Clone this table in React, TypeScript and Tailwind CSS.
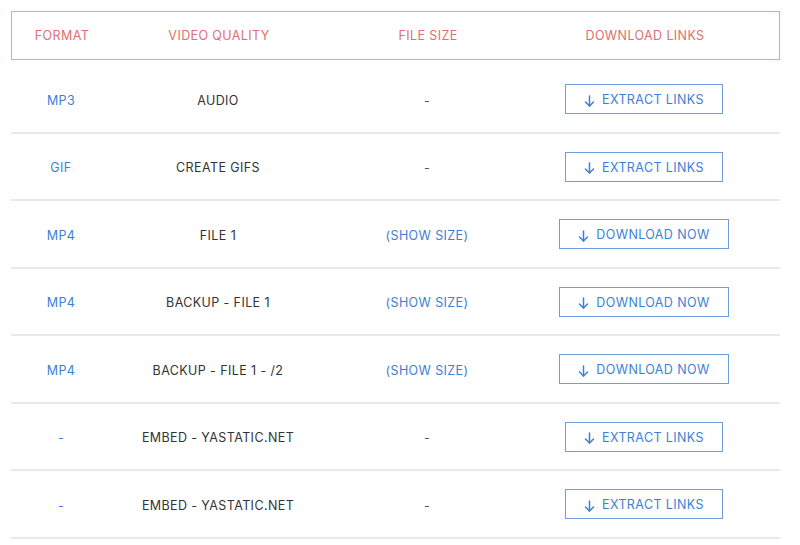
import React from "react";

type Row = {
  format: string;
  quality: string;
  size: string;
  sizeLink?: boolean;
  action: "extract" | "download";
};

const rows: Row[] = [
  { format: "MP3", quality: "AUDIO", size: "-", action: "extract" },
  { format: "GIF", quality: "CREATE GIFS", size: "-", action: "extract" },
  { format: "MP4", quality: "FILE 1", size: "(SHOW SIZE)", sizeLink: true, action: "download" },
  { format: "MP4", quality: "BACKUP - FILE 1", size: "(SHOW SIZE)", sizeLink: true, action: "download" },
  { format: "MP4", quality: "BACKUP - FILE 1 - /2", size: "(SHOW SIZE)", sizeLink: true, action: "download" },
  { format: "-", quality: "EMBED - YASTATIC.NET", size: "-", action: "extract" },
  { format: "-", quality: "EMBED - YASTATIC.NET", size: "-", action: "extract" },
];

const Arrow = () => (
  <svg width="11" height="12" viewBox="0 0 11 12" fill="none" stroke="currentColor" strokeWidth="1.5" strokeLinecap="round" strokeLinejoin="round">
    <path d="M5.5 1 V11" />
    <path d="M1.5 7 L5.5 11 L9.5 7" />
  </svg>
);

const cols = "grid grid-cols-[100px_214px_204px_230px_21px] items-center";

export default function App() {
  return (
    <div
      className="w-[800px] h-[545px] bg-white overflow-hidden pt-[11px] pl-[11px]"
      style={{ fontFamily: "Inter, 'Noto Sans', 'Liberation Sans', sans-serif" }}
    >
      <div className="w-[769px]">
        <div className={`${cols} h-[49px] pt-[2px] border border-solid border-[#ec9e9e] text-[12.5px] tracking-[0.4px] text-[#e26e6e]`}>
          <div className="text-center">FORMAT</div>
          <div className="text-center">VIDEO QUALITY</div>
          <div className="text-center">FILE SIZE</div>
          <div className="text-center">DOWNLOAD LINKS</div>
          <div />
        </div>
        <div className="h-[6px]" />
        {rows.map((r, i) => (
          <div
            key={i}
            className={`${cols} h-[67.5px] border-b-2 border-[#e9e9e9] text-[12.5px] tracking-[0.4px]`}
          >
            <div className="text-center pt-[5px] text-[#3d7fd6]">{r.format}</div>
            <div className="text-center pt-[5px] text-[#333]">{r.quality}</div>
            <div className={`text-center pt-[5px] ${r.sizeLink ? "text-[#3d7fd6]" : "text-[#555]"}`}>{r.size}</div>
            <div className="flex justify-center pt-[1px]">
              <div
                className={`flex items-center justify-center gap-[7px] h-[30px] pt-[3px] border border-[#6f9ddc] text-[#3d7fd6] ${
                  r.action === "extract" ? "w-[158px]" : "w-[170px]"
                }`}
              >
                <Arrow />
                <span>{r.action === "extract" ? "EXTRACT LINKS" : "DOWNLOAD NOW"}</span>
              </div>
            </div>
            <div />
          </div>
        ))}
      </div>
    </div>
  );
}
